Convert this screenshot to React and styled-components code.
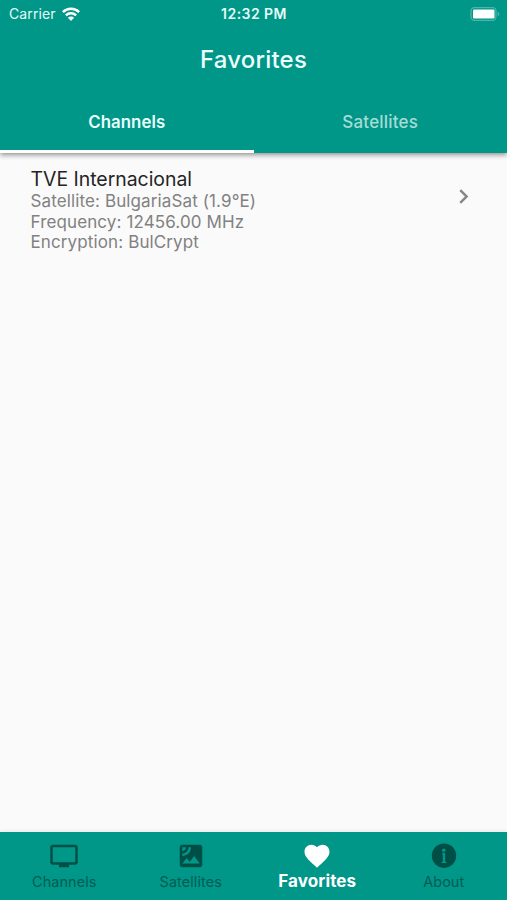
import React, { useState } from 'react';
import styled, { createGlobalStyle } from 'styled-components';
import { MdChevronRight, MdFavorite, MdSatellite, MdTv } from 'react-icons/md';

const colour = {
  primary: '#009688',
  background: '#FAFAFA',
  inactive: '#004F47',
  inactiveLabel: '#005D54',
  title: '#242424',
  text: '#818181'
};

const GlobalStyle = createGlobalStyle`
  * {
    box-sizing: border-box;
  }

  body {
    margin: 0;
    font-family: Inter, Roboto, sans-serif;
    background: ${colour.background};
  }

  button {
    font-family: inherit;
    border: 0;
    padding: 0;
    background: none;
    cursor: pointer;
  }
`;

const Screen = styled.div`
  display: flex;
  flex-direction: column;
  height: 100vh;
  background: ${colour.background};
`;

const Header = styled.header`
  background: ${colour.primary};
  color: #FFF;
  height: 152.5px;
  box-shadow: 0 2px 5px rgba(0, 0, 0, 0.42);
`;

const StatusBar = styled.div`
  display: grid;
  grid-template-columns: 1fr auto 1fr;
  align-items: center;
  height: 27px;
  padding: 0 7px 0 9px;
  color: #E4FCF9;
`;

const Carrier = styled.div`
  display: flex;
  align-items: center;
  gap: 6px;
  font-size: 14px;
  letter-spacing: 0.1px;
`;

const Clock = styled.div`
  font-size: 14px;
  font-weight: 600;
  letter-spacing: 0.45px;
  margin-right: 1px;
`;

const BatterySlot = styled.div`
  display: flex;
  justify-content: flex-end;
`;

const Title = styled.h1`
  display: flex;
  align-items: center;
  justify-content: center;
  height: 65px;
  margin: 0;
  font-size: 24px;
  font-weight: 500;
  letter-spacing: 0.2px;
  color: #EFFFFD;
`;

const Tabs = styled.div`
  display: flex;
  height: 61px;
`;

const Tab = styled.button`
  flex: 1;
  height: 61px;
  padding-top: 2px;
  font-size: ${props => (props.$active ? '16.8px' : '17px')};
  font-weight: ${props => (props.$active ? 600 : 500)};
  letter-spacing: ${props => (props.$active ? '0.1px' : '0.2px')};
  color: ${props => (props.$active ? '#E9FFFC' : '#A5DCD6')};
  border-bottom: 3px solid ${props => (props.$active ? '#FFF' : 'transparent')};
`;

const List = styled.main`
  flex: 1;
`;

const Row = styled.div`
  display: flex;
  justify-content: space-between;
  padding: 14.5px 29.5px 0 30.5px;
`;

const Name = styled.div`
  font-size: 19.4px;
  line-height: 24px;
  color: ${colour.title};
`;

const Detail = styled.div`
  font-size: 17px;
  line-height: 20.7px;
  letter-spacing: 0.12px;
  color: ${colour.text};
`;

const Chevron = styled(MdChevronRight)`
  margin-top: 15px;
  color: #858585;
`;

const BottomBar = styled.nav`
  display: flex;
  height: 68px;
  padding-left: 1px;
  background: ${colour.primary};
  box-shadow: 0 -1px 4px rgba(0, 0, 0, 0.08);
`;

const NavItem = styled.button`
  flex: 1 1 0;
  display: flex;
  flex-direction: column;
  align-items: center;
  padding-top: 9px;
  color: ${props => (props.$active ? '#FFF' : colour.inactive)};
`;

const NavLabel = styled.span`
  font-size: ${props => (props.$active ? '17px' : '14.4px')};
  font-weight: ${props => (props.$active ? 700 : 400)};
  line-height: 21px;
  letter-spacing: 0.1px;
  color: ${props => (props.$active ? '#FFF' : colour.inactiveLabel)};
`;

const WifiIcon = () => (
  <svg width='18' height='14' viewBox='0 0 18 14' fill='none' stroke='#FFF' strokeWidth='2.5'>
    <path d='M0.9 5.1a11.5 11.5 0 0 1 16.2 0' />
    <path d='M3.9 8.4a7.2 7.2 0 0 1 10.2 0' />
    <path d='M9 13.9L5.9 10.8a4.4 4.4 0 0 1 6.2 0z' fill='#FFF' stroke='none' />
  </svg>
);

const BatteryIcon = () => (
  <svg width='30' height='14' viewBox='0 0 30 14'>
    <rect x='1' y='0.7' width='25' height='12.6' rx='3.5' fill='none' stroke='#4DB5AB' strokeWidth='1.3' />
    <rect x='3' y='2.6' width='21.5' height='9' rx='1.3' fill='#FFF' />
    <path d='M27.7 4.8c2.2 0.7 2.2 3.7 0 4.4z' fill='#4DB5AB' />
  </svg>
);

// filled info circle with a serif "i"
const InfoIcon = ({ size }) => (
  <svg width={size} height={size} viewBox='0 0 30 30' fill='none'>
    <circle cx='15' cy='14.7' r='12.2' fill='currentColor' />
    <circle cx='14.8' cy='9.2' r='1.7' fill={colour.primary} />
    <path d='M13.4 12.9h1.6v8.3' stroke={colour.primary} strokeWidth='2.3' strokeLinejoin='round' />
    <path d='M13.2 21.4h3.8' stroke={colour.primary} strokeWidth='1.4' strokeLinecap='round' />
  </svg>
);

const tabs = ['Channels', 'Satellites'];

const favorites = [
  {
    name: 'TVE Internacional',
    satellite: 'BulgariaSat (1.9°E)',
    frequency: '12456.00 MHz',
    encryption: 'BulCrypt'
  }
];

const navItems = [
  { label: 'Channels', icon: MdTv },
  { label: 'Satellites', icon: MdSatellite },
  { label: 'Favorites', icon: MdFavorite },
  { label: 'About', icon: InfoIcon }
];

export default function App() {
  const [tab, setTab] = useState('Channels');
  const [page, setPage] = useState('Favorites');

  return (
    <Screen>
      <GlobalStyle />
      <Header>
        <StatusBar>
          <Carrier>Carrier <WifiIcon /></Carrier>
          <Clock>12:32 PM</Clock>
          <BatterySlot><BatteryIcon /></BatterySlot>
        </StatusBar>
        <Title>Favorites</Title>
        <Tabs>
          {tabs.map(label => (
            <Tab key={label} $active={label === tab} onClick={() => setTab(label)}>{label}</Tab>
          ))}
        </Tabs>
      </Header>
      <List>
        {favorites.map(channel => (
          <Row key={channel.name}>
            <div>
              <Name>{channel.name}</Name>
              <Detail>Satellite: {channel.satellite}</Detail>
              <Detail>Frequency: {channel.frequency}</Detail>
              <Detail>Encryption: {channel.encryption}</Detail>
            </div>
            <Chevron size={29} />
          </Row>
        ))}
      </List>
      <BottomBar>
        {navItems.map(({ label, icon: Icon }) => (
          <NavItem key={label} $active={label === page} onClick={() => setPage(label)}>
            <Icon size={30} />
            <NavLabel $active={label === page}>{label}</NavLabel>
          </NavItem>
        ))}
      </BottomBar>
    </Screen>
  );
}
